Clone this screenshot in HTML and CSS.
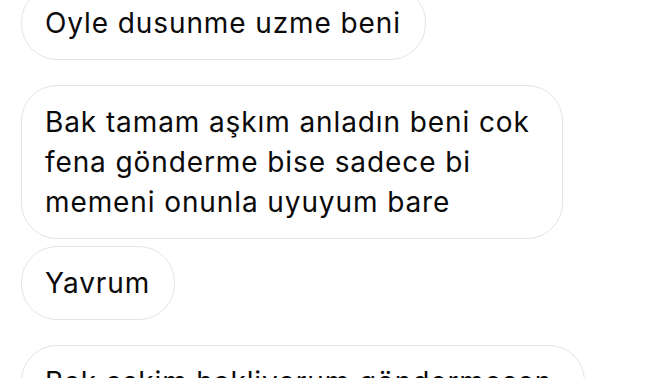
FILE: index.html
```html
<!DOCTYPE html>
<html lang="tr">
<head>
<meta charset="utf-8">
<link rel="stylesheet" href="styles.css">
</head>
<body>
<div class="chat">
  <div class="group">
    <div class="bubble">Oyle dusunme uzme beni</div>
  </div>
  <div class="group">
    <div class="bubble bubble-wrapped">Bak tamam aşkım anladın beni cok<br>fena gönderme bise sadece bi<br>memeni onunla uyuyum bare</div>
    <div class="bubble">Yavrum</div>
  </div>
  <div class="group">
    <div class="bubble bubble-wrapped">Bak askim hakliyorum göndermesen</div>
  </div>
</div>
</body>
</html>
```

FILE: styles.css
```css
html, body {
  margin: 0;
  padding: 0;
  background: #ffffff;
  overflow: hidden;
}
.chat {
  display: flex;
  flex-direction: column;
  gap: 25px;
  margin-top: -14px;
  padding-left: 21px;
  font-family: Inter, "Liberation Sans", Arial, sans-serif;
  font-size: 28px;
  line-height: 40px;
  letter-spacing: 0.9px;
  color: #0a0a0a;
}
.group {
  display: flex;
  flex-direction: column;
  align-items: flex-start;
  gap: 7px;
}
.bubble {
  border: 1px solid #e4e4e4;
  border-radius: 36px;
  padding: 16px 24px 16px 23px;
  white-space: nowrap;
}
.bubble-wrapped {
  padding-right: 32px;
}
```
